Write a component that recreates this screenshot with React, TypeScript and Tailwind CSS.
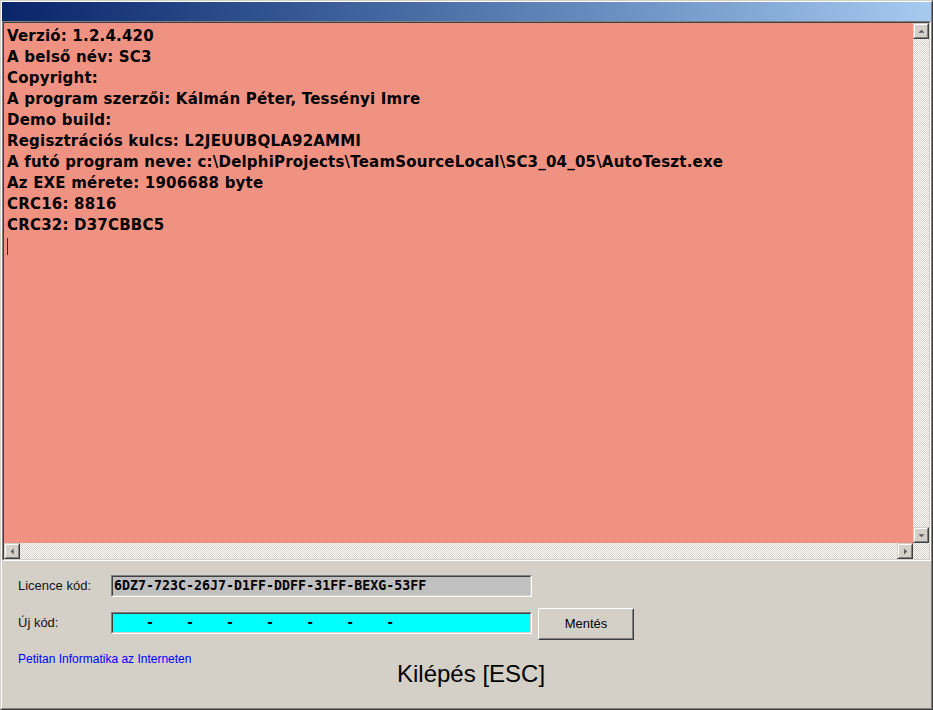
import React from "react";

const lines = [
  "Verzió: 1.2.4.420",
  "A belső név: SC3",
  "Copyright:",
  "A program szerzői: Kálmán Péter, Tessényi Imre",
  "Demo build:",
  "Regisztrációs kulcs: L2JEUUBQLA92AMMI",
  "A futó program neve: c:\\DelphiProjects\\TeamSourceLocal\\SC3_04_05\\AutoTeszt.exe",
  "Az EXE mérete: 1906688 byte",
  "CRC16: 8816",
  "CRC32: D37CBBC5",
];

const track =
  "bg-[repeating-conic-gradient(#d4d0c8_0_25%,#ffffff_0_50%)] bg-[length:2px_2px]";

const Arrow = ({ dir }: { dir: "up" | "down" | "left" | "right" }) => {
  const pts = {
    up: "4,9 11,9 7.5,5.5",
    down: "4,6 11,6 7.5,9.5",
    left: "9,4 9,11 5.5,7.5",
    right: "6,4 6,11 9.5,7.5",
  }[dir];
  return (
    <svg width="14" height="14" viewBox="0 0 14 14">
      <polygon points={pts} fill="#5a5a5a" />
    </svg>
  );
};

const ScrollButton = ({ dir }: { dir: "up" | "down" | "left" | "right" }) => (
  <div className="w-4 h-4 shrink-0 border border-[#d4d0c8] border-r-[#404040] border-b-[#404040] bg-[#d4d0c8]">
    <div className="w-full h-full border border-white border-r-[#808080] border-b-[#808080] flex items-center justify-center">
      <Arrow dir={dir} />
    </div>
  </div>
);

const Sunken = ({ className, children }: { className?: string; children?: React.ReactNode }) => (
  <div className={`border border-[#808080] border-r-white border-b-white ${className ?? ""}`}>
    <div className="w-full h-full border border-[#404040] border-r-[#d4d0c8] border-b-[#d4d0c8]">
      {children}
    </div>
  </div>
);

const App = () => {
  return (
    <div className="w-[933px] h-[710px] border border-[#d4d0c8] border-r-[#404040] border-b-[#404040] bg-[#d4d0c8] font-['Liberation_Sans',Arial,sans-serif]">
      <div className="w-full h-full flex flex-col border border-white border-r-[#808080] border-b-[#808080]">
        {/* title bar */}
        <div className="h-[19px] shrink-0 bg-gradient-to-r from-[#0a246a] to-[#a6caf0]" />

        {/* memo */}
        <Sunken className="h-[540px] shrink-0">
          <div className="flex flex-col h-full">
            <div className="flex flex-1 min-h-0">
              <div className="flex-1 bg-[#f09282] pl-[3px] pt-[3px] font-['DejaVu_Sans',sans-serif] font-bold text-[15px] leading-[21px] tracking-[0.2px] text-black">
                {lines.map((l) => (
                  <div key={l} className="whitespace-pre">
                    {l}
                  </div>
                ))}
                <div className="h-[21px] flex items-center">
                  <span className="w-px h-[17px] bg-[#0b3a4a]" />
                </div>
              </div>
              <div className={`w-4 flex flex-col justify-between ${track}`}>
                <ScrollButton dir="up" />
                <ScrollButton dir="down" />
              </div>
            </div>
            <div className={`h-4 shrink-0 flex ${track}`}>
              <ScrollButton dir="left" />
              <div className="flex-1" />
              <ScrollButton dir="right" />
              <div className="w-4" />
            </div>
          </div>
        </Sunken>

        {/* bottom panel */}
        <div className="flex-1 pt-[14px] text-[13px] text-[#111]">
          <div className="flex items-center h-[22px]">
            <span className="w-[109px] pl-[16px]">Licence kód:</span>
            <Sunken className="w-[421px] h-[22px]">
              <div className="w-full h-full bg-[#c0c0c0] pl-[1px] flex items-center font-['DejaVu_Sans_Mono',monospace] font-bold text-[13.3px] text-black whitespace-pre">
                6DZ7-723C-26J7-D1FF-DDFF-31FF-BEXG-53FF
              </div>
            </Sunken>
          </div>

          <div className="flex items-center h-[32px] mt-[11px]">
            <span className="w-[109px] pl-[16px] -mt-[3px]">Új kód:</span>
            <Sunken className="w-[421px] h-[22px] -mt-[3px]">
              <div className="w-full h-full bg-[#00ffff] pl-[1px] flex items-center font-['DejaVu_Sans_Mono',monospace] font-bold text-[13.3px] text-black whitespace-pre">
                {"    -    -    -    -    -    -    -"}
              </div>
            </Sunken>
            <div className="ml-[6px] w-[96px] h-[32px] border border-white border-r-[#404040] border-b-[#404040]">
              <div className="w-full h-full border border-[#d4d0c8] border-r-[#808080] border-b-[#808080] flex items-center justify-center text-black">
                Mentés
              </div>
            </div>
          </div>

          <div className="flex mt-[9px]">
            <div className="w-[395px] pl-[16px] pt-[1px] text-[12px] text-[#0000ff]">
              Petitan Informatika az Interneten
            </div>
            <div className="text-[24px] leading-[28px] pt-[11px] text-black">Kilépés [ESC]</div>
          </div>
        </div>
      </div>
    </div>
  );
};

export default App;
